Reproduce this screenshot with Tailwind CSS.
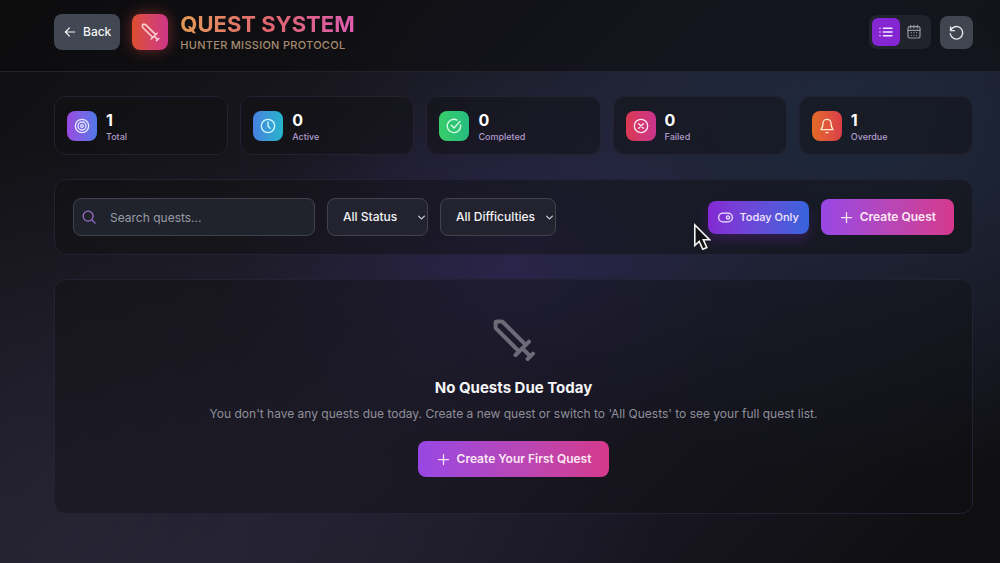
<!DOCTYPE html>
<html lang="en">
<head>
    <meta charset="UTF-8">
    <meta name="viewport" content="width=device-width, initial-scale=1.0">
    <title>Quest System</title>
    <script src="https://cdn.jsdelivr.net/npm/@tailwindcss/browser@4"></script>
</head>
<body class="min-h-screen bg-[#131215] bg-[radial-gradient(ellipse_280px_190px_at_510px_265px,rgba(52,40,100,0.45),transparent),radial-gradient(ellipse_520px_340px_at_850px_130px,rgba(31,42,62,0.9),transparent),radial-gradient(ellipse_600px_400px_at_60px_540px,rgba(40,37,54,0.8),transparent),linear-gradient(135deg,#0f0f10_0%,#15141a_20%,#221f30_50%,#1a1825_70%,#0f0f11_95%)] bg-no-repeat font-['Inter',sans-serif] text-white">
    <!-- Shared icon -->
    <svg class="hidden">
        <symbol id="sword" viewBox="0 0 24 24">
            <path d="M14.3 17.5 3.1 6.3a1.2 1.2 0 0 1-.3-.8V3.4a.7.7 0 0 1 .7-.7h2.1a1.2 1.2 0 0 1 .8.3L17.6 14.2M19.5 12.8l-6.7 6.7M16.2 16.2l4 4M21.5 18.8l-2.7 2.7"/>
        </symbol>
    </svg>

    <header class="border-b border-[#24212d] bg-[#0c0c0e]/60 pt-[11px] pb-[18px] pl-[54px] pr-[27px]">
        <div class="flex items-center justify-between">
            <div class="flex items-center gap-3">
                <button type="button" class="flex h-9 items-center gap-[6px] rounded-lg bg-[#414753] px-[9px] text-xs font-medium text-gray-100">
                    <svg class="size-[14px]" viewBox="0 0 24 24" fill="none" stroke="currentColor" stroke-width="2" stroke-linecap="round" stroke-linejoin="round"><path d="M20 12H4M11 5l-7 7 7 7"/></svg>
                    Back
                </button>
                <div class="flex size-9 items-center justify-center rounded-lg bg-linear-to-r from-[#dc4d2b] to-[#cf3587] shadow-[0_0_14px_rgba(220,70,70,0.5)]">
                    <svg class="size-[21px] text-[#fbd0cf]" fill="none" stroke="currentColor" stroke-width="1.8" stroke-linecap="round" stroke-linejoin="round"><use href="#sword"/></svg>
                </div>
                <div>
                    <h1 class="bg-linear-to-r from-[#e59a55] via-[#e0656f] to-[#dc5cae] bg-clip-text text-[22px] leading-[26px] font-bold text-transparent">QUEST SYSTEM</h1>
                    <p class="text-[11px] leading-4 font-medium tracking-wide text-[#a58c70]">HUNTER MISSION PROTOCOL</p>
                </div>
            </div>
            <div class="flex items-center gap-[9px]">
                <div class="flex rounded-lg bg-[#20222c] p-[3px]">
                    <button type="button" aria-label="List view" class="flex size-7 items-center justify-center rounded-md bg-[#8526d3]">
                        <svg class="size-4 text-purple-100" viewBox="0 0 24 24" fill="none" stroke="currentColor" stroke-width="2.2" stroke-linecap="round"><path d="M8 6.500h13M8 12h13M8 17.500h13M3 6.500h.02M3 12h.02M3 17.500h.02"/></svg>
                    </button>
                    <button type="button" aria-label="Calendar view" class="flex size-7 items-center justify-center rounded-md text-[#9498a2]">
                        <svg class="size-4" viewBox="0 0 24 24" fill="none" stroke="currentColor" stroke-width="1.8" stroke-linecap="round" stroke-linejoin="round"><rect x="3" y="4" width="18" height="17" rx="2.5"/><path d="M3 9.5h18M7 2v4M12 2v4M17 2v4M8 13h.02M12 13h.02M16 13h.02M8 17h.02M12 17h.02M16 17h.02"/></svg>
                    </button>
                </div>
                <button type="button" aria-label="Refresh" class="flex size-[33px] items-center justify-center rounded-lg bg-[#414550] text-gray-200">
                    <svg class="size-[15px]" viewBox="0 0 24 24" fill="none" stroke="currentColor" stroke-width="2.2" stroke-linecap="round" stroke-linejoin="round"><path d="M2.5 3v6h6M2.5 9A10 10 0 1 1 2 14"/></svg>
                </button>
            </div>
        </div>
    </header>

    <main class="flex flex-col gap-6 pt-6 pl-[54px] pr-[27px]">
        <!-- Stats -->
        <section class="grid grid-cols-5 gap-3">
            <div class="flex h-[59px] items-center gap-[9px] rounded-xl border border-[#242130] bg-[#0f0f11]/50 px-3">
                <div class="flex size-[30px] items-center justify-center rounded-lg bg-linear-to-r from-[#9748e0] to-[#4d78e8]">
                    <svg class="size-4 text-indigo-100" viewBox="0 0 24 24" fill="none" stroke="currentColor" stroke-width="2"><circle cx="12" cy="12" r="10"/><circle cx="12" cy="12" r="6"/><circle cx="12" cy="12" r="2"/></svg>
                </div>
                <div class="pt-1">
                    <p class="text-base leading-[18px] font-bold">1</p>
                    <p class="text-[9px] leading-[15px] font-medium text-[#b09bcb]">Total</p>
                </div>
            </div>
            <div class="flex h-[59px] items-center gap-[9px] rounded-xl border border-[#242130] bg-[#0f0f11]/50 px-3">
                <div class="flex size-[30px] items-center justify-center rounded-lg bg-linear-to-r from-[#477fe0] to-[#23b4cb]">
                    <svg class="size-4 text-cyan-100" viewBox="0 0 24 24" fill="none" stroke="currentColor" stroke-width="2" stroke-linecap="round" stroke-linejoin="round"><circle cx="12" cy="12" r="10"/><path d="M12 6v6.5l3 3"/></svg>
                </div>
                <div class="pt-1">
                    <p class="text-base leading-[18px] font-bold">0</p>
                    <p class="text-[9px] leading-[15px] font-medium text-[#b09bcb]">Active</p>
                </div>
            </div>
            <div class="flex h-[59px] items-center gap-[9px] rounded-xl border border-[#242130] bg-[#0f0f11]/50 px-3">
                <div class="flex size-[30px] items-center justify-center rounded-lg bg-linear-to-r from-[#38cd68] to-[#26bd80]">
                    <svg class="size-4 text-green-100" viewBox="0 0 24 24" fill="none" stroke="currentColor" stroke-width="2" stroke-linecap="round" stroke-linejoin="round"><path d="M21.8 10.5A10 10 0 1 1 16.5 3.1M8 11l4 4 9-10"/></svg>
                </div>
                <div class="pt-1">
                    <p class="text-base leading-[18px] font-bold">0</p>
                    <p class="text-[9px] leading-[15px] font-medium text-[#b09bcb]">Completed</p>
                </div>
            </div>
            <div class="flex h-[59px] items-center gap-[9px] rounded-xl border border-[#242130] bg-[#0f0f11]/50 px-3">
                <div class="flex size-[30px] items-center justify-center rounded-lg bg-linear-to-r from-[#db3850] to-[#cb348c]">
                    <svg class="size-4 text-pink-100" viewBox="0 0 24 24" fill="none" stroke="currentColor" stroke-width="2" stroke-linecap="round"><circle cx="12" cy="12" r="10"/><path d="m8.5 8.5 7 7M15.5 8.5l-7 7"/></svg>
                </div>
                <div class="pt-1">
                    <p class="text-base leading-[18px] font-bold">0</p>
                    <p class="text-[9px] leading-[15px] font-medium text-[#b09bcb]">Failed</p>
                </div>
            </div>
            <div class="flex h-[59px] items-center gap-[9px] rounded-xl border border-[#242130] bg-[#0f0f11]/50 px-3">
                <div class="flex size-[30px] items-center justify-center rounded-lg bg-linear-to-r from-[#e36a25] to-[#da3d48]">
                    <svg class="size-4 text-orange-100" viewBox="0 0 24 24" fill="none" stroke="currentColor" stroke-width="2" stroke-linecap="round" stroke-linejoin="round"><path d="M12 2a6 6 0 0 0-6 6c0 4-.5 6-3 9.5h18c-2.500-3.500-3-5.500-3-9.500a6 6 0 0 0-6-6ZM10.500 22h3"/></svg>
                </div>
                <div class="pt-1">
                    <p class="text-base leading-[18px] font-bold">1</p>
                    <p class="text-[9px] leading-[15px] font-medium text-[#b09bcb]">Overdue</p>
                </div>
            </div>
        </section>

        <!-- Filters -->
        <section class="flex h-[76px] items-center justify-between rounded-xl border border-[#252134] bg-[#0f0f11]/50 px-[18px]">
            <div class="flex items-center gap-3">
                <div class="relative">
                    <svg class="absolute top-3 left-[9px] size-[14px] text-[#9a6fd0]" viewBox="0 0 24 24" fill="none" stroke="currentColor" stroke-width="2.2" stroke-linecap="round"><circle cx="10.5" cy="10.5" r="8.5"/><path d="m17 17 5.5 5.5"/></svg>
                    <input type="text" id="search" aria-label="Search quests" placeholder="Search quests..." class="h-[38px] w-[242px] rounded-lg border border-[#40434c] bg-[#20232c] pr-3 pl-9 text-xs text-white placeholder:text-[#989ba5]">
                </div>
                <div class="relative">
                    <select id="status" aria-label="Status" class="h-[38px] w-[101px] appearance-none rounded-lg border border-[#42434f] bg-[#22232e] pl-[15px] text-xs font-medium text-gray-100">
                        <option>All Status</option>
                    </select>
                    <svg class="pointer-events-none absolute top-4 right-[3px] size-[7px] text-gray-300" viewBox="0 0 24 24" fill="none" stroke="currentColor" stroke-width="4" stroke-linecap="round" stroke-linejoin="round"><path d="m2 7 10 10L22 7"/></svg>
                </div>
                <div class="relative">
                    <select id="difficulty" aria-label="Difficulty" class="h-[38px] w-[116px] appearance-none rounded-lg border border-[#42434f] bg-[#22232e] pl-[15px] text-xs font-medium text-gray-100">
                        <option>All Difficulties</option>
                    </select>
                    <svg class="pointer-events-none absolute top-4 right-[3px] size-[7px] text-gray-300" viewBox="0 0 24 24" fill="none" stroke="currentColor" stroke-width="4" stroke-linecap="round" stroke-linejoin="round"><path d="m2 7 10 10L22 7"/></svg>
                </div>
            </div>
            <div class="flex items-center gap-3">
                <button type="button" class="flex h-[33px] items-center gap-[6px] rounded-lg bg-linear-to-r from-[#8428d4] to-[#3563dc] px-[10px] text-[11px] font-medium text-purple-100 shadow-[0_6px_12px_rgba(133,38,211,0.25)]">
                    <svg class="size-[15px]" viewBox="0 0 24 24" fill="none" stroke="currentColor" stroke-width="2"><rect x="1" y="5" width="22" height="14" rx="7"/><circle cx="16" cy="12" r="2.5"/></svg>
                    Today Only
                </button>
                <button type="button" class="flex h-9 items-center gap-[6px] rounded-lg bg-linear-to-r from-[#9846e4] to-[#d5388c] px-[18px] text-xs font-semibold text-pink-100">
                    <svg class="size-[15px]" viewBox="0 0 24 24" fill="none" stroke="currentColor" stroke-width="2" stroke-linecap="round"><path d="M12 4v16M4 12h16"/></svg>
                    Create Quest
                </button>
            </div>
        </section>

        <!-- Empty state -->
        <section class="flex flex-col items-center rounded-xl border border-[#252134] bg-[#0f0f11]/40 py-9 text-center">
            <svg class="size-12 text-[#6c6b78]" fill="none" stroke="currentColor" stroke-width="2" stroke-linecap="round" stroke-linejoin="round"><use href="#sword"/></svg>
            <h2 class="mt-3 text-[15px] leading-6 font-bold text-gray-100">No Quests Due Today</h2>
            <p class="mt-1 text-xs leading-5 text-[#8f8f9b]">You don't have any quests due today. Create a new quest or switch to 'All Quests' to see your full quest list.</p>
            <button type="button" class="mt-[17px] flex h-9 items-center gap-[6px] rounded-lg bg-linear-to-r from-[#9846e4] to-[#d5388c] px-[18px] text-xs font-semibold text-pink-100">
                <svg class="size-[15px]" viewBox="0 0 24 24" fill="none" stroke="currentColor" stroke-width="2" stroke-linecap="round"><path d="M12 4v16M4 12h16"/></svg>
                Create Your First Quest
            </button>
        </section>
    </main>

    <!-- Pointer -->
    <svg class="pointer-events-none absolute top-[223px] left-[693px] h-7 w-[18px]" viewBox="0 0 18 28" fill="#111113" stroke="#f4f4f4" stroke-width="1.6" stroke-linejoin="miter"><path d="M1.8 2v20.5l4.4-4.2 3.6 8 4-1.8-3.5-7.8h6.2z"/></svg>
</body>
</html>
